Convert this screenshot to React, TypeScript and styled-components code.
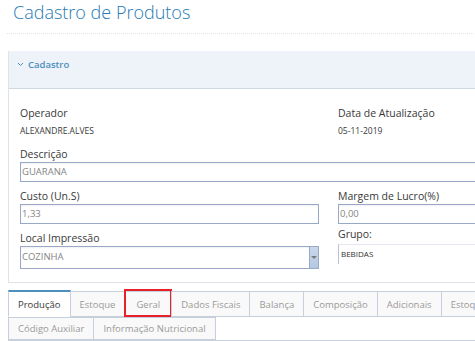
import styled, { createGlobalStyle } from "styled-components";

const GlobalStyle = createGlobalStyle`
  html, body {
    margin: 0;
    padding: 0;
    background: #fff;
    overflow: hidden;
  }
  body {
    font-family: "Open Sans", "Noto Sans", sans-serif;
    color: #393939;
  }
`;

const Page = styled.div`
  width: 600px;
  padding: 0 0 0 8px;
`;

const PageHeader = styled.div`
  margin-left: -1px;
  padding: 0 0 9px 6px;
  border-bottom: 1px dotted #e2e2e2;
`;

const Title = styled.h1`
  margin: 0;
  font-size: 18px;
  line-height: 24px;
  font-weight: 300;
  color: #2679b5;
`;

const Panel = styled.div`
  margin-top: 17px;
  border-left: 1px solid #dde3e8;
  border-bottom: 1px solid #dde3e8;
`;

const PanelHeader = styled.div`
  display: flex;
  align-items: center;
  gap: 4px;
  height: 38px;
  padding: 0 0 11px 8px;
  box-sizing: border-box;
  background: #edf3f9;
  border-bottom: 1px solid #cfd8de;
  color: #4c8fbd;
  font-size: 9.5px;
  font-weight: 600;
`;

const PanelBody = styled.div`
  padding: 17px 0 6px 11px;
  display: grid;
  grid-template-columns: 299px 1fr;
  column-gap: 19px;
`;

const Field = styled.div<{ $span?: boolean; $lift?: number }>`
  grid-column: ${(p) => (p.$span ? "1 / -1" : "auto")};
  display: flex;
  flex-direction: column;
  margin-bottom: 7px;
  margin-top: ${(p) => (p.$lift ? `-${p.$lift}px` : "0")};
`;

const Label = styled.label`
  display: block;
  font-size: 10.5px;
  line-height: 14px;
  margin-bottom: 1px;
  color: #393939;
`;

const Value = styled.div`
  font-size: 8.5px;
  line-height: 14px;
  margin-top: 3px;
  margin-bottom: 2px;
  color: #393939;
`;

const Input = styled.div`
  height: 20px;
  box-sizing: border-box;
  border: 1px solid #98a8c6;
  box-shadow: inset 0 1px 2px rgba(0, 0, 0, 0.06);
  font-size: 9.5px;
  line-height: 18px;
  padding-left: 1px;
  color: #858585;
`;

const SelectBox = styled.div`
  display: flex;
  height: 23px;
  box-sizing: border-box;
  border: 1px solid #98a8c6;
  box-shadow: inset 0 1px 2px rgba(0, 0, 0, 0.06);
`;

const SelectText = styled.div`
  flex: 1;
  font-size: 9.5px;
  line-height: 19px;
  padding-left: 1px;
  color: #858585;
`;

const SelectButton = styled.div`
  width: 8px;
  display: flex;
  align-items: center;
  justify-content: center;
  background: linear-gradient(#c9d8ea, #b3c8e2);
  border-left: 1px solid #98a8c6;
`;

const Caret = styled.div`
  width: 0;
  height: 0;
  border-left: 3px solid transparent;
  border-right: 3px solid transparent;
  border-top: 3px solid #7a7a7a;
`;

const GroupBox = styled.div`
  height: 20px;
  margin-top: 2px;
  box-sizing: border-box;
  border-left: 1px solid #b8c4d6;
  border-top: 1px solid #e4e8ee;
  font-size: 8px;
  line-height: 18px;
  padding-left: 2px;
  color: #333;
`;

const Tabs = styled.div`
  margin-top: 7px;
  width: 540px;
  display: flex;
  flex-wrap: wrap;
  border-bottom: 2px solid #c5d0dc;
`;

const Tab = styled.div<{ $active?: boolean; $marked?: boolean; $short?: boolean }>`
  position: relative;
  height: ${(p) => (p.$active ? "27px" : p.$short ? "23px" : "26px")};
  align-self: flex-end;
  box-sizing: border-box;
  padding: 0 ${(p) => (p.$marked ? "11px" : "9px")};
  display: flex;
  align-items: center;
  font-size: 9.5px;
  white-space: nowrap;
  color: ${(p) => (p.$active ? "#393939" : "#999")};
  background: ${(p) => (p.$active ? "#fff" : "#f9f9f9")};
  border: 1px solid #c5d0dc;
  border-top: ${(p) => (p.$active ? "2px solid #4c8fbd" : "1px solid #c5d0dc")};
  border-bottom-color: ${(p) => (p.$active ? "#fff" : "#c5d0dc")};
  margin-right: -1px;
  ${(p) =>
    p.$marked &&
    `
    &::after {
      content: "";
      position: absolute;
      top: -3px;
      left: -1px;
      right: -1px;
      bottom: -1px;
      border: 2px solid #e8202a;
    }
  `}
`;

const Chevron = () => (
  <svg width="7" height="5" viewBox="0 0 7 5">
    <path d="M1 1 L3.5 3.5 L6 1" fill="none" stroke="#4c8fbd" strokeWidth="1" />
  </svg>
);

const tabsRow = [
  "Produção",
  "Estoque",
  "Geral",
  "Dados Fiscais",
  "Balança",
  "Composição",
  "Adicionais",
  "Estoque Mínimo",
  "Código Auxiliar",
  "Informação Nutricional",
];

export default function App() {
  return (
    <>
      <GlobalStyle />
      <Page>
        <PageHeader>
          <Title>Cadastro de Produtos</Title>
        </PageHeader>
        <Panel>
          <PanelHeader>
            <Chevron />
            Cadastro
          </PanelHeader>
          <PanelBody>
            <Field>
              <Label>Operador</Label>
              <Value>ALEXANDRE.ALVES</Value>
            </Field>
            <Field>
              <Label>Data de Atualização</Label>
              <Value>05-11-2019</Value>
            </Field>
            <Field $span>
              <Label>Descrição</Label>
              <Input>GUARANA</Input>
            </Field>
            <Field>
              <Label>Custo (Un.S)</Label>
              <Input>1,33</Input>
            </Field>
            <Field>
              <Label>Margem de Lucro(%)</Label>
              <Input>0,00</Input>
            </Field>
            <Field>
              <Label>Local Impressão</Label>
              <SelectBox>
                <SelectText>COZINHA</SelectText>
                <SelectButton>
                  <Caret />
                </SelectButton>
              </SelectBox>
            </Field>
            <Field $lift={4}>
              <Label>Grupo:</Label>
              <GroupBox>BEBIDAS</GroupBox>
            </Field>
          </PanelBody>
        </Panel>
        <Tabs>
          {tabsRow.map((t, i) => (
            <Tab key={t} $active={i === 0} $marked={t === "Geral"} $short={i >= 8}>
              {t}
            </Tab>
          ))}
        </Tabs>
      </Page>
    </>
  );
}
